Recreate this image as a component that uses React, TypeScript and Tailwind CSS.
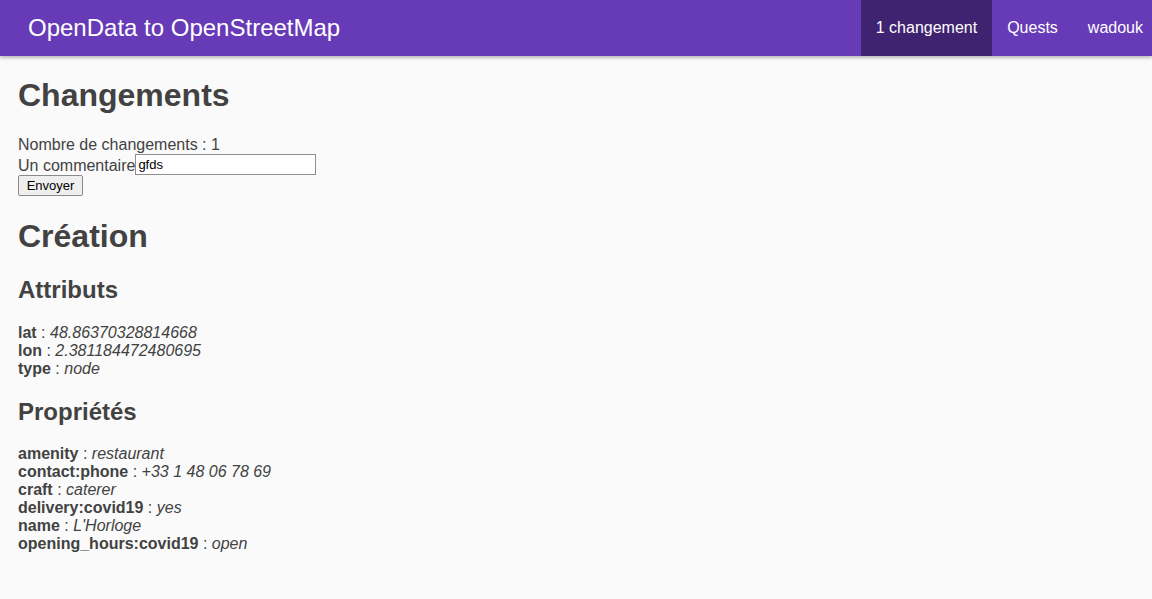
import React, { useState } from "react";

const attributs: [string, string][] = [
  ["lat", "48.86370328814668"],
  ["lon", "2.381184472480695"],
  ["type", "node"],
];

const proprietes: [string, string][] = [
  ["amenity", "restaurant"],
  ["contact:phone", "+33 1 48 06 78 69"],
  ["craft", "caterer"],
  ["delivery:covid19", "yes"],
  ["name", "L'Horloge"],
  ["opening_hours:covid19", "open"],
];

function TagList({ items }: { items: [string, string][] }) {
  return (
    <div className="my-4">
      {items.map(([k, v]) => (
        <div key={k} className="leading-[18px]">
          <b className="font-bold">{k}</b> : <i className="italic">{v}</i>
        </div>
      ))}
    </div>
  );
}

export default function App() {
  const [comment, setComment] = useState("gfds");

  return (
    <div className="min-h-[599px] bg-[#fafafa] text-[#424242] font-['Liberation_Sans',Arial,sans-serif] text-base">
      {/* Navbar */}
      <nav className="h-14 bg-[#673ab7] flex items-center justify-between overflow-hidden shadow-[0_2px_3px_rgba(0,0,0,0.25)] text-white">
        <span className="pl-7 text-2xl">OpenData to OpenStreetMap</span>
        <ul className="flex h-14 shrink-0 -mr-1.5">
          <li className="px-[15px] leading-14 bg-[#3f2371]">1 changement</li>
          <li className="px-[15px] leading-14">Quests</li>
          <li className="px-[15px] leading-14">wadouk</li>
        </ul>
      </nav>

      <main className="px-[18px] pb-8">
        <h1 className="text-[32px] font-bold leading-[36.8px] my-[21.44px]">Changements</h1>
        <div className="leading-[18.4px]">Nombre de changements : 1</div>
        <div className="flex items-end">
          <label className="leading-[18.4px]">Un commentaire</label>
          <input
            value={comment}
            onChange={(e) => setComment(e.target.value)}
            className="w-[181px] h-[21px] bg-white border border-[#8f8f8f] px-[2px] text-[13px] text-black font-['Liberation_Sans',Arial,sans-serif] outline-none"
          />
        </div>
        <div className="flex">
          <button className="w-[65px] h-[21px] text-[13px] text-black bg-[#efefef] border border-[#8a8a8a] rounded-[2px] leading-none">
            Envoyer
          </button>
        </div>

        <h1 className="text-[32px] font-bold leading-[36.8px] mt-[22px] mb-[21.44px]">Création</h1>
        <h2 className="text-2xl font-bold leading-[27.6px] mb-[19.92px]">Attributs</h2>
        <TagList items={attributs} />
        <h2 className="text-2xl font-bold leading-[27.6px] mt-[19.92px] mb-[19.92px]">Propriétés</h2>
        <TagList items={proprietes} />
      </main>
    </div>
  );
}
